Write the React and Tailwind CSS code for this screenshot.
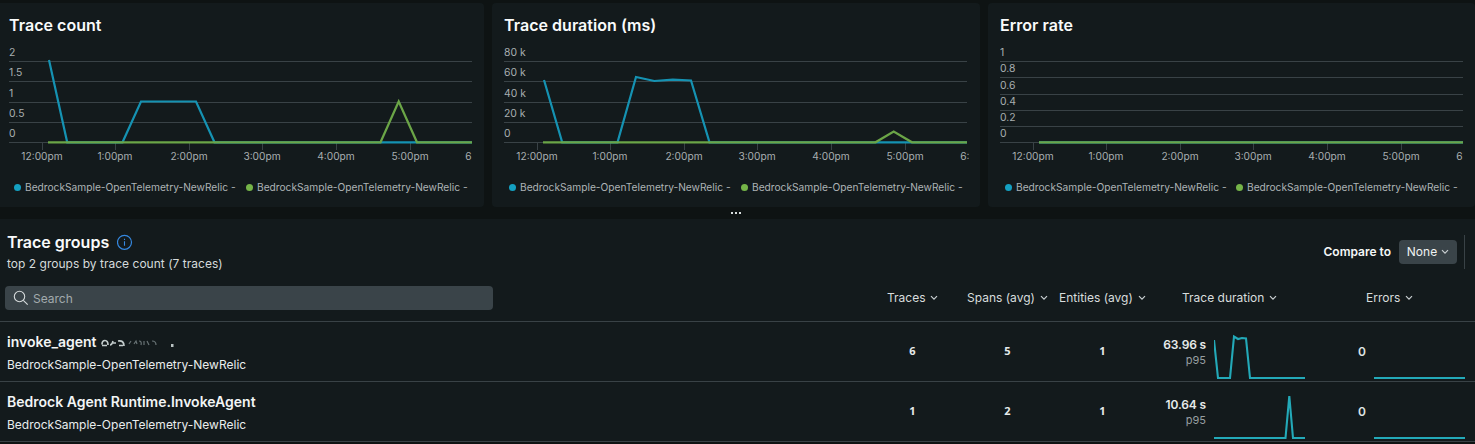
import React from "react";

const HOURS = [33.5, 106.5, 180.5, 253.5, 327.5, 401.5];
const HOUR_LABELS = ["12:00pm", "1:00pm", "2:00pm", "3:00pm", "4:00pm", "5:00pm"];

const CHARTS = [
  {
    title: "Trace count",
    grid: [[16.5, "2"], [36.5, "1.5"], [57.5, "1"], [77.5, "0.5"], [97.5, "0"]],
    blue: "40,15 58.2,97.3 113.5,97.3 132,56.5 187,56.5 205.5,97.3 463,97.3",
    green: "39,97.3 371.5,97.3 389.7,56.5 408,97.3 463,97.3",
    lastLabel: "6",
    card: "w-[484px] rounded-r pl-[9px]",
    legend: "pl-[5px] gap-[10px]",
  },
  {
    title: "Trace duration (ms)",
    grid: [[16.5, "80 k"], [36.5, "60 k"], [57.5, "40 k"], [77.5, "20 k"], [97.5, "0"]],
    blue: "40,35 58.2,97.3 113.5,97.3 132,32 150.3,36 168.8,34.7 187,35.5 205.5,97.3 463,97.3",
    green: "39,97.3 371.5,97.3 389.7,86.5 408,97.3 463,97.3",
    lastLabel: "6:",
    card: "w-[488px] rounded pl-[12px]",
    legend: "pl-[5px] gap-[10px]",
  },
  {
    title: "Error rate",
    grid: [[16.5, "1"], [32.5, "0.8"], [49.5, "0.6"], [65.5, "0.4"], [81.5, "0.2"], [97.5, "0"]],
    blue: "39,97.3 463,97.3",
    green: "39,97.3 463,97.3",
    lastLabel: "6",
    card: "w-[487px] rounded pl-[12px]",
    legend: "pl-[5px] gap-[9px]",
  },
];

function LineChart({ chart }) {
  return (
    <svg width="466" height="120" viewBox="0 0 466 120" className="mt-[3px] block shrink-0 overflow-hidden">
      {chart.grid.map(([y, label]) => (
        <g key={label}>
          <line x1="0" x2="463" y1={y} y2={y} stroke="#394246" strokeWidth="1" />
          <text x="0" y={y - 5.5} fontSize="10.4" fill="#a8aeb0">{label}</text>
        </g>
      ))}
      {HOURS.map((x, i) => (
        <g key={x}>
          <line x1={x} x2={x} y1="98" y2="105" stroke="#394246" />
          <text x={x - 0.5} y="115" fontSize="10.200" textAnchor="middle" fill="#a8aeb0">{HOUR_LABELS[i]}</text>
        </g>
      ))}
      <text x="456.300" y="115" fontSize="10.200" fill="#a8aeb0">{chart.lastLabel}</text>
      <polyline points={chart.blue} fill="none" stroke="#1592b2" strokeWidth="2.200" />
      <polyline points={chart.green} fill="none" stroke="#6ba547" strokeWidth="2.200" />
    </svg>
  );
}

function LegendItem({ dot }) {
  return (
    <span className="flex items-center gap-[4px]">
      <span className={`h-[7px] w-[7px] rounded-full ${dot}`} />
      <span className="w-[211px] whitespace-nowrap text-[10.2px] leading-[14px] text-[#aeb4b6]">
        BedrockSample-OpenTelemetry-NewRelic -
      </span>
    </span>
  );
}

function ChartCard({ chart }) {
  return (
    <section className={`flex h-[204px] shrink-0 flex-col overflow-hidden bg-[#131a1c] ${chart.card}`}>
      <h2 className="mt-[12px] h-[20px] whitespace-nowrap text-[16px] font-semibold leading-[20px] tracking-[0.03px] text-[#f9fbfb]">
        {chart.title}
      </h2>
      <div className="mt-[7px]">
        <LineChart chart={chart} />
      </div>
      <div className={`mt-[15px] flex ${chart.legend}`}>
        <LegendItem dot="bg-[#14a0c1]" />
        <LegendItem dot="bg-[#75b448]" />
      </div>
    </section>
  );
}

function Chevron() {
  return (
    <svg width="8" height="6" viewBox="0 0 8 6" className="block shrink-0">
      <path d="M1 1.2 4 4.2 7 1.2" fill="none" stroke="#c9cfd1" strokeWidth="1.2" />
    </svg>
  );
}

function ColumnHeader({ label, className, gap = "gap-[5px]" }) {
  return (
    <div className={`flex shrink-0 items-center whitespace-nowrap text-[12px] leading-[16px] text-[#d8dddd] ${gap} ${className}`}>
      {label}
      <Chevron />
    </div>
  );
}

function Sparkline({ points }) {
  return (
    <svg width="91" height="50" viewBox="0 0 91 50" className="block shrink-0">
      <polyline points={points} fill="none" stroke="#23a9b8" strokeWidth="2.100" />
    </svg>
  );
}

function Redacted() {
  return (
    <svg width="80" height="14" viewBox="0 0 80 14" className="ml-[4px] block">
      <g fill="none" stroke="#c3cccc" strokeWidth="1.7">
        <path d="M1 9.5q0-4 3-4t3 4.500M1 10.500h5" />
        <path d="M9 10q2 0 3-4M12 8h3" strokeWidth="1.5" />
        <path d="M17 6q6-1 6 5M18 10.500h4" />
      </g>
      <g fill="none" stroke="#687375" strokeWidth="1.200">
        <path d="M28 9l2-3M33 9l2-3 1 3M38 6q3 0 2 4M43 6v4M46 6l2 4M51 6q4 0 4 4" />
      </g>
      <rect x="70" y="9" width="2.500" height="3" fill="#b9c2c2" />
    </svg>
  );
}

const ROWS = [
  {
    name: "invoke_agent",
    redacted: true,
    counts: [6, 5, 1],
    duration: "63.96 s",
    points: "0,8 4,46 16,46 20,4.5 24,7 28,6 32,6.5 36,46 91,46",
  },
  {
    name: "Bedrock Agent Runtime.InvokeAgent",
    counts: [1, 2, 1],
    duration: "10.64 s",
    points: "0,46 71.500,46 75.300,4 79,46 91,46",
  },
];

function GroupRow({ row }) {
  return (
    <div className="flex h-[60px] shrink-0 border-b border-[#394246]">
      <div className="w-[865px] shrink-0 pl-[7px] pt-[11px]">
        <div className="flex h-[18px] items-center whitespace-nowrap text-[14px] font-semibold leading-[18px] text-[#f2f5f5]">
          {row.name}
          {row.redacted && <Redacted />}
        </div>
        <div className="mt-[6px] whitespace-nowrap text-[12px] leading-[16px] text-[#e9eded]">
          BedrockSample-OpenTelemetry-NewRelic
        </div>
      </div>
      {row.counts.map((n, i) => (
        <div
          key={i}
          className="flex w-[95px] shrink-0 items-center justify-center font-['Open_Sans',sans-serif] text-[11px] font-bold text-[#e6eaea]"
        >
          {n}
        </div>
      ))}
      <div className="w-[56px] shrink-0 whitespace-nowrap pt-[15px] text-right">
        <div className="text-[12px] font-semibold leading-[16px] tracking-[-0.15px] text-[#e6eaea]">{row.duration}</div>
        <div className="text-[11px] leading-[14px] text-[#979fa1]">p95</div>
      </div>
      <div className="ml-[8px] pt-[10px]"><Sparkline points={row.points} /></div>
      <div className="flex w-[69px] shrink-0 items-center justify-end pr-[8px] pt-px text-[12px] font-semibold text-[#dfe3e4]">0</div>
      <div className="pt-[10px]"><Sparkline points="0,46 91,46" /></div>
    </div>
  );
}

export default function App() {
  return (
    <div className="flex h-[444px] w-[1475px] flex-col overflow-hidden bg-[#0e1313] font-['Inter',sans-serif]">
      <div className="flex gap-2 pt-[3px]">
        {CHARTS.map((c) => <ChartCard key={c.title} chart={c} />)}
      </div>
      <div className="flex h-[12px] shrink-0 justify-center gap-[2px] pr-[3px] pt-[5px]">
        <span className="h-[2px] w-[2px] bg-[#d8dddd]" />
        <span className="h-[2px] w-[2px] bg-[#d8dddd]" />
        <span className="h-[2px] w-[2px] bg-[#d8dddd]" />
      </div>
      <section className="flex h-[223px] shrink-0 flex-col bg-[#131a1c]">
        <div className="flex h-[67px] shrink-0 justify-between">
          <div className="pl-[7px] pt-[13px]">
            <div className="flex h-[20px] items-center gap-[8px]">
              <h2 className="whitespace-nowrap text-[16px] font-semibold leading-[20px] text-[#f9fbfb]">Trace groups</h2>
              <svg width="16" height="16" viewBox="0 0 16 16" className="block">
                <circle cx="7.500" cy="8.300" r="7" fill="none" stroke="#3588e0" strokeWidth="1.2" />
                <path d="M7.500 7.300v4.500M7.500 4.800v1.300" stroke="#3588e0" strokeWidth="1.100" />
              </svg>
            </div>
            <p className="mt-[4px] whitespace-nowrap text-[12px] leading-[16px] tracking-[0.02px] text-[#d5dadb]">
              top 2 groups by trace count (7 traces)
            </p>
          </div>
          <div className="flex items-start pr-[10px] pt-[16px]">
            <span className="mt-[9px] whitespace-nowrap text-[12px] font-semibold leading-[16px] text-[#f4f7f7]">Compare to</span>
            <button className="ml-[8px] mt-[5px] flex h-[24px] w-[58px] items-center justify-center gap-[4px] rounded bg-[#3a4449] text-[12px] text-[#f0f3f3]">
              None
              <Chevron />
            </button>
            <span className="ml-[7px] h-[34px] w-px bg-[#394246]" />
          </div>
        </div>
        <div className="flex h-[36px] shrink-0 border-b border-[#394246]">
          <div className="w-[887px] shrink-0 pl-[5px]">
            <div className="flex h-[24px] w-[488px] items-center gap-[4px] rounded bg-[#3a4449] pl-[8px] text-[12px] text-[#a2aaad]">
              <svg width="16" height="16" viewBox="0 0 16 16" className="block">
                <circle cx="6.500" cy="6.500" r="5.200" fill="none" stroke="#d5dadb" strokeWidth="1.100" />
                <path d="M10.300 10.300 14.700 14.700" stroke="#d5dadb" strokeWidth="1.100" />
              </svg>
              <span className="pt-px">Search</span>
            </div>
          </div>
          <ColumnHeader label="Traces" className="h-[24px] w-[80px]" gap="gap-[4px]" />
          <ColumnHeader label="Spans (avg)" className="h-[24px] w-[92px]" />
          <ColumnHeader label="Entities (avg)" className="h-[24px] w-[123px]" />
          <ColumnHeader label="Trace duration" className="h-[24px] w-[184px]" />
          <ColumnHeader label="Errors" className="h-[24px] w-[100px]" />
        </div>
        {ROWS.map((r) => <GroupRow key={r.name} row={r} />)}
      </section>
    </div>
  );
}
